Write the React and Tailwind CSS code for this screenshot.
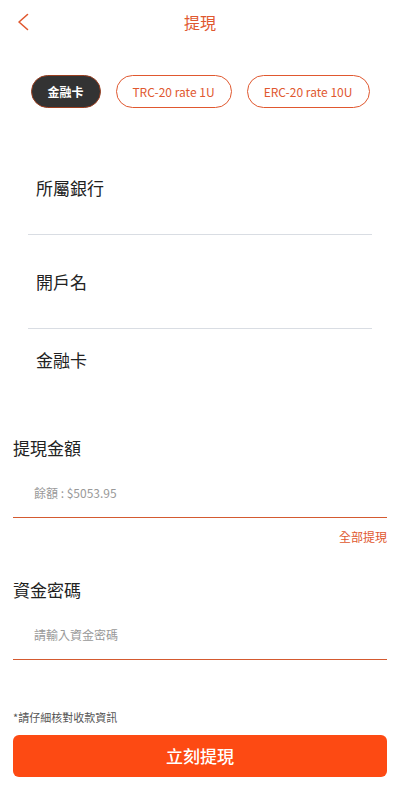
export default function App() {
  const font = { fontFamily: '"Noto Sans CJK TC", "Noto Sans", sans-serif' };
  return (
    <div className="w-[400px] h-[800px] bg-white flex flex-col" style={font}>
      <div className="relative h-[44px] flex items-center justify-center">
        <svg className="absolute left-[16px] top-[13px]" width="14" height="18" viewBox="0 0 14 18" fill="none">
          <path d="M11.5 1.5 L3 9 L11.5 16.5" stroke="#e0582f" strokeWidth="1.6" strokeLinecap="round" strokeLinejoin="round" />
        </svg>
        <span className="text-[16px] text-[#e0582f] leading-[20px]">提現</span>
      </div>
      <div className="mt-[31px] flex justify-center gap-[15px]">
        <div className="h-[33px] w-[70px] rounded-full bg-[#333333] border border-[#9a3e1f] flex items-center justify-center text-white text-[12px] font-bold">金融卡</div>
        <div className="h-[33px] w-[116px] rounded-full border border-[#e0582f] flex items-center justify-center text-[#e0582f] text-[12px]">TRC-20 rate 1U</div>
        <div className="h-[33px] w-[123px] rounded-full border border-[#e0582f] flex items-center justify-center text-[#e0582f] text-[12px]">ERC-20 rate 10U</div>
      </div>
      <div className="mt-[33px] mx-[28px] flex flex-col">
        <div className="h-[94px] border-b border-[#d9dde3] flex items-center pl-[8px] text-[17px] text-[#222]">所屬銀行</div>
        <div className="h-[94px] border-b border-[#d9dde3] flex items-center pl-[8px] text-[17px] text-[#222]">開戶名</div>
        <div className="h-[62px] flex items-center pl-[8px] text-[17px] text-[#222]">金融卡</div>
      </div>
      <div className="px-[13px] flex flex-col">
        <div className="mt-[45px] h-[24px] leading-[24px] text-[17px] text-[#222]">提現金額</div>
        <div className="pt-[24px] pb-[15px] border-b border-[#d45a30] pl-[21px] text-[12px] leading-[18px] text-[#999]">餘額 : $5053.95</div>
        <div className="mt-[10px] text-right text-[12px] leading-[18px] text-[#e0582f]">全部提現</div>
        <div className="mt-[32px] h-[24px] leading-[24px] text-[17px] text-[#222]">資金密碼</div>
        <div className="pt-[24px] pb-[15px] border-b border-[#d45a30] pl-[21px] text-[12px] leading-[18px] text-[#999]">請輸入資金密碼</div>
        <div className="mt-[49px] text-[11px] leading-[16px] text-[#555]">*請仔細核對收款資訊</div>
        <div className="mt-[10px] h-[42px] rounded-[6px] bg-[#fd4a13] flex items-center justify-center text-white text-[17px] font-medium">立刻提現</div>
      </div>
    </div>
  );
}
